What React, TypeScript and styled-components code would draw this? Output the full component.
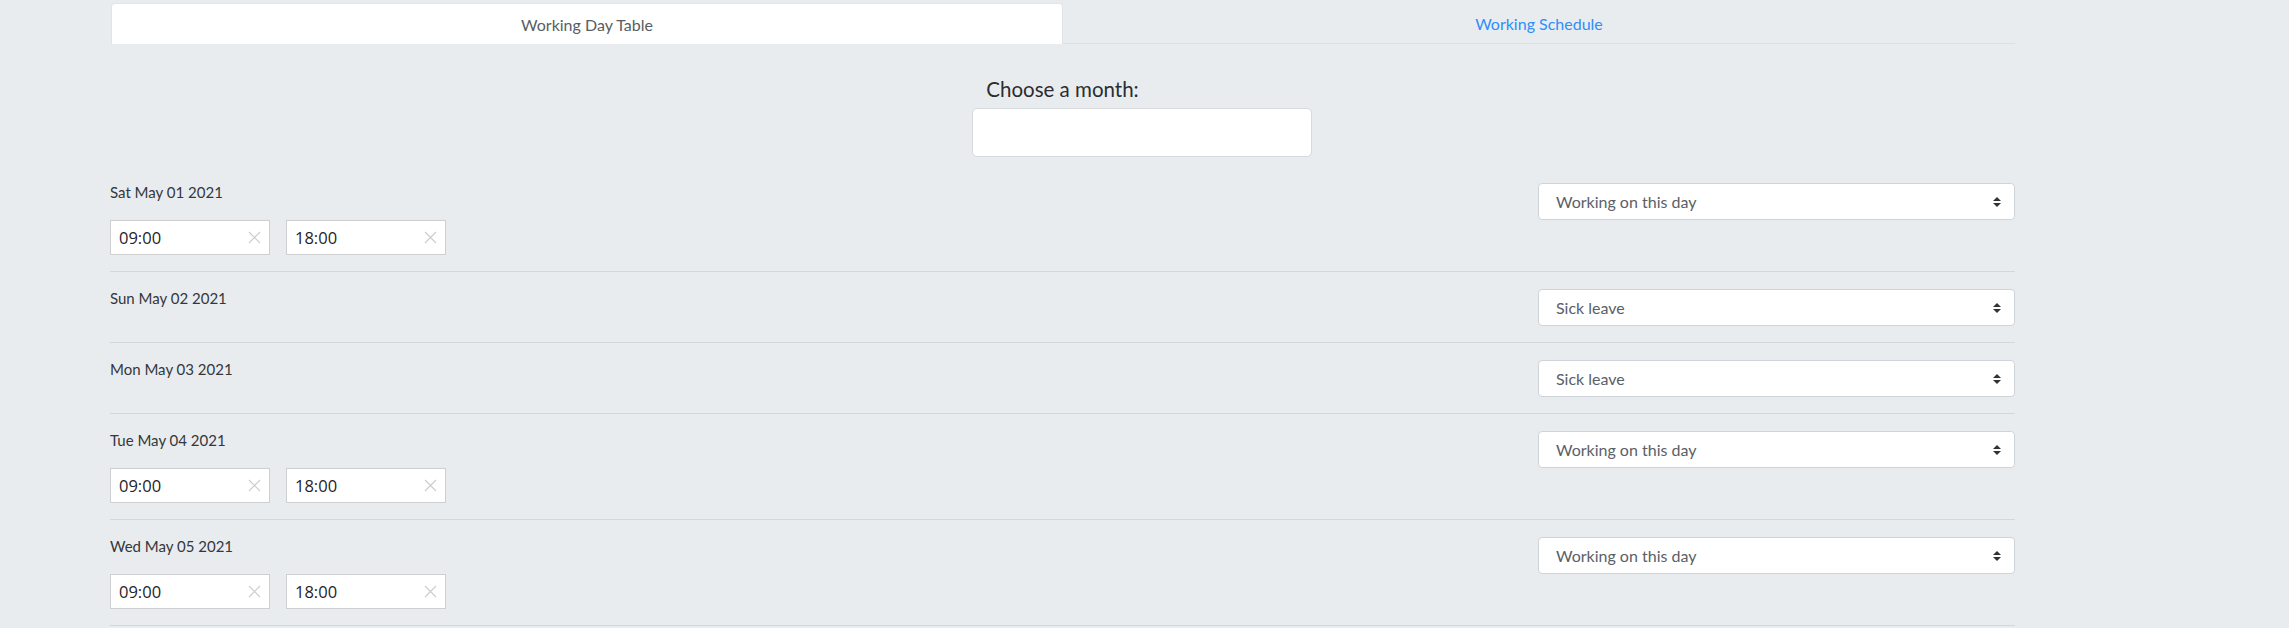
import React from "react";
import styled, { createGlobalStyle } from "styled-components";

const GlobalStyle = createGlobalStyle`
  html, body {
    margin: 0;
    padding: 0;
    background: #e9ecef;
  }
  body {
    font-family: Lato, "Open Sans", "Noto Sans", sans-serif;
    font-weight: 400;
    color: #333;
  }
`;

const Page = styled.div`
  width: 1905px;
  margin-left: 110px;
  padding-top: 3px;
`;

const TabBar = styled.div`
  display: flex;
  border-bottom: 1px solid #dde1e5;
  margin-left: 1px;
`;

const Tab = styled.div<{ $active?: boolean }>`
  flex: 1;
  display: flex;
  align-items: center;
  justify-content: center;
  font-size: 16px;
  box-sizing: border-box;
  border: 1px solid ${(p) => (p.$active ? "#e1e4e7" : "transparent")};
  border-bottom: none;
  border-radius: 4px 4px 0 0;
  background: ${(p) => (p.$active ? "#fff" : "transparent")};
  color: ${(p) => (p.$active ? "#575d63" : "#2f8ef7")};
  margin-bottom: ${(p) => (p.$active ? "-1px" : "0")};
  height: ${(p) => (p.$active ? "41px" : "40px")};
`;

const MonthBlock = styled.div`
  display: flex;
  flex-direction: column;
  align-items: center;
  margin-top: 30px;
  margin-bottom: 9px;
`;

const MonthLabel = styled.div`
  font-size: 20.5px;
  line-height: 30px;
  color: #2a2d31;
`;

const MonthInput = styled.div`
  width: 340px;
  height: 49px;
  box-sizing: border-box;
  margin-top: 4px;
  margin-left: 158px;
  background: #fff;
  border: 1px solid #d6d9dd;
  border-radius: 5px;
`;

const Row = styled.div`
  display: grid;
  grid-template-columns: 1fr 477px;
  padding: 14px 0 16px;
  border-bottom: 1px solid #d3d7dc;
`;

const LeftCol = styled.div`
  display: flex;
  flex-direction: column;
`;

const DateLabel = styled.div`
  font-size: 15px;
  line-height: 24px;
  color: #34373b;
`;

const TimeRow = styled.div`
  display: flex;
  gap: 16px;
  margin-top: 16px;
`;

const TimeBox = styled.div`
  width: 160px;
  height: 35px;
  box-sizing: border-box;
  background: #fff;
  border: 1px solid #cfcfcf;
  display: flex;
  align-items: center;
  justify-content: space-between;
  padding: 0 8px 0 8px;
  font-family: "Open Sans", "Noto Sans", sans-serif;
  font-weight: 400;
  font-size: 16.5px;
  color: #1f2326;
`;

const SelectBox = styled.div`
  height: 37px;
  box-sizing: border-box;
  margin-top: 3px;
  background: #fff;
  border: 1px solid #ced4da;
  border-radius: 4px;
  display: flex;
  align-items: center;
  justify-content: space-between;
  padding: 0 13px 0 17px;
  font-size: 16px;
  color: #5a6068;
`;

const ClearIcon = () => (
  <svg width="13" height="13" viewBox="0 0 13 13">
    <path d="M1 1 L12 12 M12 1 L1 12" stroke="#cccccc" strokeWidth="1.1" fill="none" />
  </svg>
);

const UpDown = () => (
  <svg width="8" height="10" viewBox="0 0 8 10">
    <path d="M0 4 L4 0 L8 4 Z M0 6 L4 10 L8 6 Z" fill="#333" />
  </svg>
);

type Day = { date: string; status: string; times?: [string, string] };

const days: Day[] = [
  { date: "Sat May 01 2021", status: "Working on this day", times: ["09:00", "18:00"] },
  { date: "Sun May 02 2021", status: "Sick leave" },
  { date: "Mon May 03 2021", status: "Sick leave" },
  { date: "Tue May 04 2021", status: "Working on this day", times: ["09:00", "18:00"] },
  { date: "Wed May 05 2021", status: "Working on this day", times: ["09:00", "18:00"] },
];

export default function App() {
  return (
    <>
      <GlobalStyle />
      <Page>
        <TabBar>
          <Tab $active>Working Day Table</Tab>
          <Tab>Working Schedule</Tab>
        </TabBar>
        <MonthBlock>
          <MonthLabel>Choose a month:</MonthLabel>
          <MonthInput />
        </MonthBlock>
        {days.map((d) => (
          <Row key={d.date}>
            <LeftCol>
              <DateLabel>{d.date}</DateLabel>
              {d.times && (
                <TimeRow>
                  {d.times.map((t) => (
                    <TimeBox key={t}>
                      <span>{t}</span>
                      <ClearIcon />
                    </TimeBox>
                  ))}
                </TimeRow>
              )}
            </LeftCol>
            <div>
              <SelectBox>
                <span>{d.status}</span>
                <UpDown />
              </SelectBox>
            </div>
          </Row>
        ))}
      </Page>
    </>
  );
}
